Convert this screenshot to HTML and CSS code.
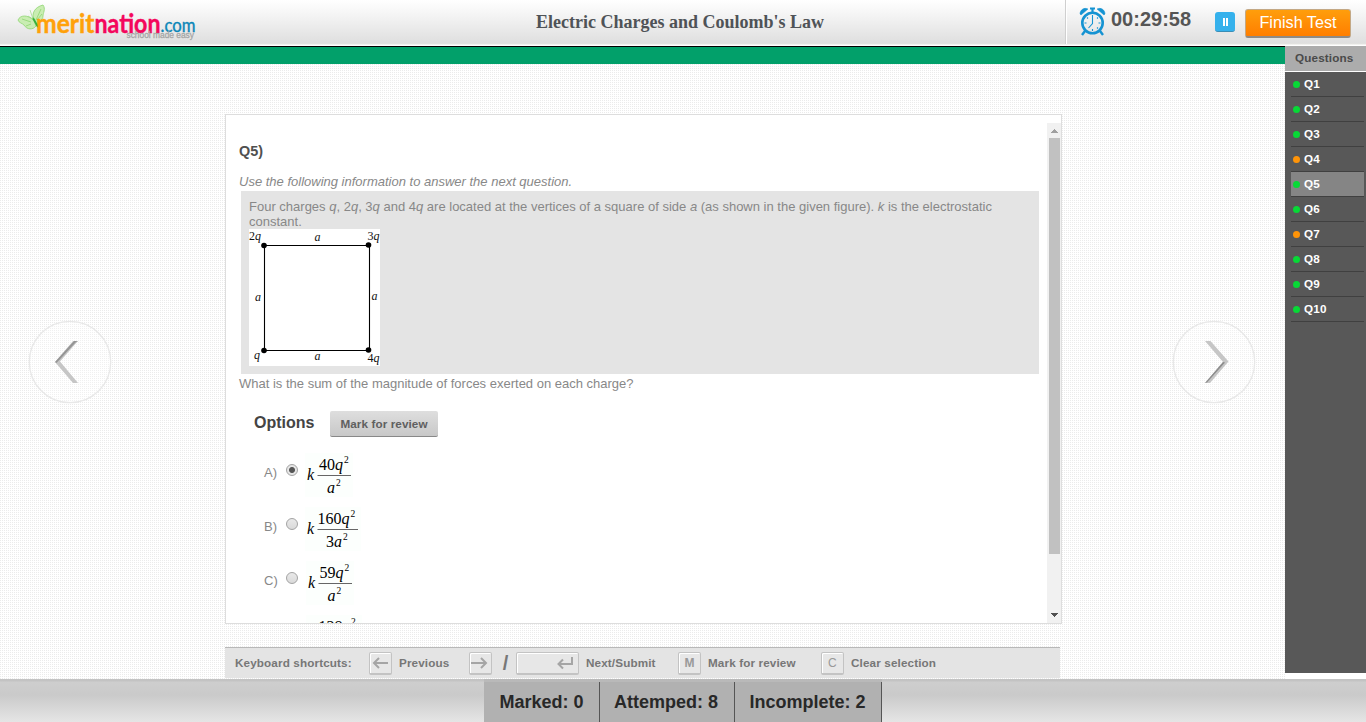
FILE: index.html
```html
<!DOCTYPE html>
<html lang="en">
<head>
<meta charset="utf-8">
<title>Electric Charges and Coulomb's Law</title>
<link rel="stylesheet" href="styles.css">
</head>
<body>
<header class="header">
  <svg class="logo" width="200" height="44" viewBox="0 0 200 44">
    <g fill="#c9edb2" stroke="#8fd672" stroke-width=".8">
      <path d="M34 21C31 13 35 7 43 5C46 9 43 13 43 16C43 20 38 23 36 26Z"/>
      <path d="M34 21C28 14 20 15 18 20C19 23 22 23 24 25C27 30 33 30 36 26Z"/>
      <path d="M36 20L41 9M37 20L42 14M31 22L22 19M31 24L26 26" fill="none"/>
    </g>
    <path d="M33 18L38 27" stroke="#35b13c" stroke-width="1.8"/>
    <path d="M33 19L30 10M33 19L28 16" stroke="#8fd672" stroke-width=".6"/>
    <g class="logo-word">
      <text x="36" y="32.500" textLength="58.500" lengthAdjust="spacingAndGlyphs" fill="#ffa10a" stroke="#ffa10a" stroke-width=".4">merit</text>
      <text x="94.500" y="32.500" textLength="66" lengthAdjust="spacingAndGlyphs" fill="#f4075c" stroke="#f4075c" stroke-width=".4">nation</text>
      <text class="logo-com" x="160.500" y="32" textLength="35" lengthAdjust="spacingAndGlyphs" fill="#0b86b8">.com</text>
    </g>
    <text class="logo-tag" x="126.500" y="38" textLength="67.500" lengthAdjust="spacingAndGlyphs" fill="#a5a5a5">school made easy</text>
  </svg>
  <h1 class="title">Electric Charges and Coulomb's Law</h1>
  <div class="tools">
    <svg class="clock" width="28" height="30" viewBox="0 0 28 30" fill="none" stroke="#1593d2">
      <circle cx="13.500" cy="16" r="10.200" stroke-width="2.600"/>
      <path d="M1 7C1 3 5 0 9 2L2 8ZM26 7C26 3 22 0 18 2L25 8Z" fill="#1593d2" stroke-width=".5"/>
      <path d="M11 1.500H16M13.500 2V6" stroke-width="2.200"/>
      <path d="M6 24L3 28M21 24L24 28" stroke-width="2.400"/>
      <path d="M13.500 9V16.500L9.500 21M13.500 8V10M13.500 22V24M5.500 16H7.500M19.500 16H21.500M8 10.500L9 11.500M19 10.500L18 11.500M18 20.500L19 21.500" stroke-width="1.100"/>
    </svg>
    <span class="time">00:29:58</span>
    <span class="pause"><i></i><i></i></span>
    <button class="finish">Finish Test</button>
  </div>
</header>

<main class="main">
  <section class="stage">
    <div class="greenbar"></div>
    <div class="workspace">
      <svg class="nav nav-prev" width="84" height="84" viewBox="0 0 84 84">
        <circle cx="42" cy="42" r="40.700" fill="#fff" fill-opacity=".25" stroke="#e8e8e8" stroke-width="1.300"/>
        <path d="M45 21H50L32 41.500L50 63H45L27 42Z" fill="#c6c6c6"/>
        <path d="M46 21H50L48 22L28.500 43L27 42Z" fill="#959595"/>
      </svg>
      <article class="panel">
        <div class="question">
          <h2 class="qnum">Q5)</h2>
          <p class="hint">Use the following information to answer the next question.</p>
          <div class="info">
            <p class="info-text">Four charges <em>q</em>, 2<em>q</em>, 3<em>q</em> and 4<em>q</em> are located at the vertices of a square of side <em>a</em> (as shown in the given figure). <em>k</em> is the electrostatic constant.</p>
            <svg class="figure" width="131" height="137" viewBox="0 0 131 137">
              <rect width="131" height="137" fill="#fff"/>
              <path d="M15.500 16.500H120.500V121.500H15.500Z" fill="none" stroke="#000" stroke-width="1.100"/>
              <circle cx="15" cy="16.500" r="2.800"/><circle cx="119.500" cy="16" r="2.800"/>
              <circle cx="15" cy="121.500" r="2.800"/><circle cx="119.500" cy="121" r="2.800"/>
              <text x="0" y="11">2<tspan class="it">q</tspan></text>
              <text x="118.500" y="11">3<tspan class="it">q</tspan></text>
              <text x="5" y="130" class="it">q</text>
              <text x="118.500" y="133">4<tspan class="it">q</tspan></text>
              <text x="65.500" y="11.500" class="it">a</text>
              <text x="6" y="71.500" class="it">a</text>
              <text x="122.500" y="71" class="it">a</text>
              <text x="65.500" y="130.500" class="it">a</text>
            </svg>
          </div>
          <p class="ask">What is the sum of the magnitude of forces exerted on each charge?</p>
          <div class="opt-head"><h3 class="opt-title">Options</h3><button class="review">Mark for review</button></div>
          <div class="option"><span class="letter">A)</span><span class="radio on"></span>
            <svg class="formula" width="52" height="44" viewBox="0 0 52 44">
              <rect width="48" height="44" fill="#fcfffd"/>
              <text x="2" y="27" class="it">k</text><text x="14" y="17">40<tspan class="it">q</tspan></text><text x="39" y="10" class="sup">2</text>
              <path d="M12.500 22.500H46"/><text x="22" y="40" class="it">a</text><text x="31" y="33" class="sup">2</text>
            </svg></div>
          <div class="option"><span class="letter">B)</span><span class="radio"></span>
            <svg class="formula" width="56" height="44" viewBox="0 0 56 44">
              <rect width="56" height="44" fill="#fcfffd"/>
              <text x="2" y="27" class="it">k</text><text x="12.500" y="17">160<tspan class="it">q</tspan></text><text x="45.500" y="10" class="sup">2</text>
              <path d="M12.500 22.500H53"/><text x="21" y="40">3<tspan class="it">a</tspan></text><text x="38" y="33" class="sup">2</text>
            </svg></div>
          <div class="option"><span class="letter">C)</span><span class="radio"></span>
            <svg class="formula" width="52" height="44" viewBox="0 0 52 44">
              <rect x="1" width="48" height="44" fill="#fcfffd"/>
              <text x="3" y="27" class="it">k</text><text x="14.500" y="17">59<tspan class="it">q</tspan></text><text x="39.500" y="10" class="sup">2</text>
              <path d="M13.500 22.500H47"/><text x="22.500" y="40" class="it">a</text><text x="31.500" y="33" class="sup">2</text>
            </svg></div>
          <div class="option"><span class="letter"></span><span class="radio hidden"></span>
            <svg class="formula" width="57" height="44" viewBox="0 0 57 44">
              <rect x="1" width="56" height="44" fill="#fcfffd"/>
              <text x="13.500" y="17">128<tspan class="it">q</tspan></text><text x="46" y="10" class="sup">2</text>
            </svg></div>
        </div>
        <div class="scrollbar">
          <svg width="15" height="15" viewBox="0 0 15 15" shape-rendering="crispEdges"><path d="M4 10L7.500 6L11 10Z" fill="#a0a0a0"/></svg>
          <div class="thumb"></div>
          <svg class="down" width="15" height="15" viewBox="0 0 15 15" shape-rendering="crispEdges"><path d="M4 5H11L7.500 9Z" fill="#505050"/></svg>
        </div>
      </article>
      <svg class="nav nav-next" width="84" height="84" viewBox="0 0 84 84">
        <circle cx="42" cy="42" r="40.700" fill="#fff" fill-opacity=".25" stroke="#e8e8e8" stroke-width="1.300"/>
        <path d="M33 21H38.500L56.500 41.500L38 63H33L51 42Z" fill="#c6c6c6"/>
        <path d="M33 63L51 42L53 42.500L35 62.500Z" fill="#8c8c8c"/>
      </svg>
    </div>
    <div class="shortcuts">
      <span class="lead">Keyboard shortcuts:</span>
      <span class="key k-left"><svg width="22" height="22" viewBox="0 0 22 22"><path d="M19 11H5M10 6L5 11L10 16"/></svg></span>
      <span class="lbl l-prev">Previous</span>
      <span class="key"><svg width="22" height="22" viewBox="0 0 22 22"><path d="M2 11H17M12 6L17 11L12 16"/></svg></span>
      <span class="slash">/</span>
      <span class="key wide"><svg width="22" height="22" viewBox="0 0 22 22"><path d="M18 5V12H5M9 7.500L4.500 12L9 16.500"/></svg></span>
      <span class="lbl l-next">Next/Submit</span>
      <span class="key"><b>M</b></span>
      <span class="lbl l-mark">Mark for review</span>
      <span class="key"><span>C</span></span>
      <span class="lbl">Clear selection</span>
    </div>
  </section>
  <aside class="sidebar">
    <div class="side-title">Questions</div>
    <ul class="qlist">
      <li>Q1</li><li>Q2</li><li>Q3</li><li class="todo">Q4</li><li class="current">Q5</li>
      <li>Q6</li><li class="todo">Q7</li><li>Q8</li><li>Q9</li><li>Q10</li>
    </ul>
  </aside>
</main>

<footer class="footer">
  <div class="stats">
    <span class="s-marked">Marked: 0</span><span class="s-att">Attemped: 8</span><span class="s-inc">Incomplete: 2</span>
  </div>
</footer>
</body>
</html>
```
FILE: styles.css
```css
* { box-sizing: border-box; margin: 0; padding: 0; }
body {
  width: 1366px; height: 722px; overflow: hidden;
  display: flex; flex-direction: column;
  font-family: "Liberation Sans", Arial, sans-serif; font-size: 13px; color: #888;
  background: #fff;
}
svg { display: block; flex: none; }
button { font-family: inherit; border: 0; }

.header {
  height: 46px; flex: none; display: flex;
  background: linear-gradient(#fff 0, #f8f8f8 10px, #dfdfdf 43px, #e4e4e0 44px, #fff 45px);
}
.logo-word { font: bold 27px Lato, sans-serif; }
.logo-com { font-size: 19.500px; font-weight: 400; stroke: #0b86b8; stroke-width: .4; }
.logo-tag { font: 9.500px "Liberation Sans", sans-serif; stroke: #a5a5a5; stroke-width: .3; }
.title {
  width: 865px; text-indent: 95px; padding-top: 11px; text-align: center;
  font: bold 18px/22px "Liberation Serif", serif; color: #4f5357;
}
.tools { width: 301px; display: flex; border-left: 1px solid #cfcfcf; box-shadow: inset 1px 0 #fff; height: 44px; }
.clock { margin: 7px 0 0 13px; }
.time { width: 108px; padding-left: 4px; padding-top: 8px; font: bold 20px/22px "Liberation Sans"; color: #555; }
.pause {
  width: 20px; height: 20px; margin-top: 12px; border-radius: 3px; background: #35b1ec;
  border-bottom: 1px solid #3a8db5; display: flex; justify-content: center; gap: 1px; padding-top: 6px;
}
.pause i { width: 2px; height: 8px; background: #fff; }
.finish {
  width: 106px; height: 29px; margin: 9px 0 0 10px; border: 1px solid #c3a885; border-bottom: 2px solid #8f8a85;
  border-radius: 3px; background: linear-gradient(#ff9e0c, #ff7e00);
  padding-bottom: 2px; font-size: 16.200px; line-height: 24px; color: #fff; white-space: nowrap;
}

.main { height: 633px; flex: none; display: flex; }
.stage {
  width: 1285px; display: flex; flex-direction: column;
  background: conic-gradient(from 0deg at 1px 1px, #fff 270deg, #ebebeb 0) 0 0 / 2px 2px;
}
.greenbar { height: 18px; border-top: 1px solid #000; background: #02a06a; flex: none; }
.workspace { height: 583px; flex: none; display: flex; }
.nav-prev { margin: 256px 0 0 28px; }
.nav-next { margin: 256px 0 0 110px; }
.panel {
  width: 837px; height: 510px; margin: 50px 0 0 113px; flex: none;
  display: flex; overflow: hidden; background: #fff; border: 1px solid #ddd;
}
.question { width: 821px; padding-left: 13px; padding-top: 28px; flex: none; }
.qnum { font-size: 14.400px; line-height: 16px; color: #505050; }
.hint { margin-top: 15px; line-height: 15px; font-style: italic; }
.info { width: 798px; height: 183px; margin: 2px 0 0 2px; padding: 8px; background: #e4e4e4; }
.info-text { height: 30px; line-height: 15px; }
.figure text { font: 12px "Liberation Serif", serif; fill: #111; }
.figure .it, .formula .it { font-style: italic; }
.ask { margin-top: 2px; line-height: 15px; }
.opt-head { display: flex; height: 26px; margin: 20px 0 16px 15px; }
.opt-title { width: 76px; font-size: 16px; line-height: 23px; color: #444; }
.review {
  width: 108px; height: 26px; border-bottom: 1px solid #888; border-radius: 2px;
  background: linear-gradient(#dedede, #c8c8c8); font-weight: bold; font-size: 11.700px; color: #606060; letter-spacing: .1px;
}
.option { height: 54px; display: flex; }
.letter { width: 47px; padding-left: 25px; padding-top: 12px; line-height: 15px; }
.radio {
  width: 12px; height: 12px; margin: 11px 7px 0 0; flex: none; border: 1px solid #a3a3a3; border-radius: 50%;
  background: linear-gradient(#e9e9e9, #dadada);
}
.radio.on { background: radial-gradient(circle, #555 0 2.500px, #e6e6e6 3.500px); }
.radio.hidden { visibility: hidden; }
.formula text { font: 16px "Liberation Serif", serif; fill: #000; }
.formula text.it { font-style: italic; }
.formula text.sup { font-size: 9.500px; }
.formula path { stroke: #666; stroke-width: 1; }
.scrollbar { width: 15px; height: 500px; margin-top: 8px; flex: none; background: #f1f1f1; display: flex; flex-direction: column; }
.thumb { width: 11px; height: 416px; margin-left: 2px; background: #c1c1c1; }
.down { margin-top: auto; }

.shortcuts {
  width: 835px; height: 31px; margin-left: 225px; display: flex; flex: none;
  background: #e4e4e4; border-top: 1px solid #b8b8b8; font-weight: bold; font-size: 11.700px; line-height: 30px; color: #777;
  letter-spacing: .13px;
}
.lead { width: 144px; padding-left: 10px; white-space: nowrap; }
.key {
  width: 23px; height: 23px; margin-top: 4px; flex: none; border: 1px solid #c3c3c3; border-bottom-width: 2px;
  border-radius: 2px; background: #e7e7e7; box-shadow: inset 1px 1px #fff;
  font: 12px/21px "Liberation Sans"; color: #999; text-align: center;
}
.key svg { margin-top: -1px; margin-left: -1px; fill: none; stroke: #a5a5a5; stroke-width: 2; }
.key.wide { width: 63px; padding-left: 38px; }
.lbl { padding-left: 7px; white-space: nowrap; }
.l-prev { width: 77px; }
.slash { width: 24px; font-size: 20px; text-align: center; padding-left: 3px; }
.l-next { width: 99px; }
.l-mark { width: 120px; }

.sidebar { width: 81px; height: 627px; background: #585858; }
.side-title {
  height: 26px; background: #acacac; border-bottom: 1px solid #fff; padding-left: 10px;
  font-weight: bold; font-size: 11.700px; line-height: 23px; letter-spacing: .15px; color: #4a4a4a;
}
.qlist { list-style: none; width: 73px; margin-left: 6px; }
.qlist li {
  height: 25px; display: flex; gap: 4px; padding-left: 2px; line-height: 23px;
  border-bottom: 1px solid #404040; font-weight: bold; font-size: 11.700px; letter-spacing: .2px; color: #fff;
}
.qlist li::before { content: ""; width: 7px; height: 7px; margin-top: 9px; border-radius: 50%; background: #07d936; }
.qlist .todo::before { background: #ff9408; }
.qlist .current { background: #858585; }

.footer {
  height: 43px; display: flex; justify-content: center;
  background: linear-gradient(#c3c3c3 0 2px, #cecece 3px, #cacaca 16px, #e5e5e5);
}
.stats {
  display: flex; height: 43px; width: 398px; border-top: 3px solid #b9b9b9;
  background: #b1b1b1; font-weight: bold; font-size: 18px; line-height: 41px; color: #282828; white-space: nowrap;
}
.stats span { border-right: 1px solid #555; text-align: center; }
.s-marked { width: 116px; }
.s-att { width: 135px; padding-right: 2px; }
.s-inc { width: 147px; padding-right: 1px; }
```
